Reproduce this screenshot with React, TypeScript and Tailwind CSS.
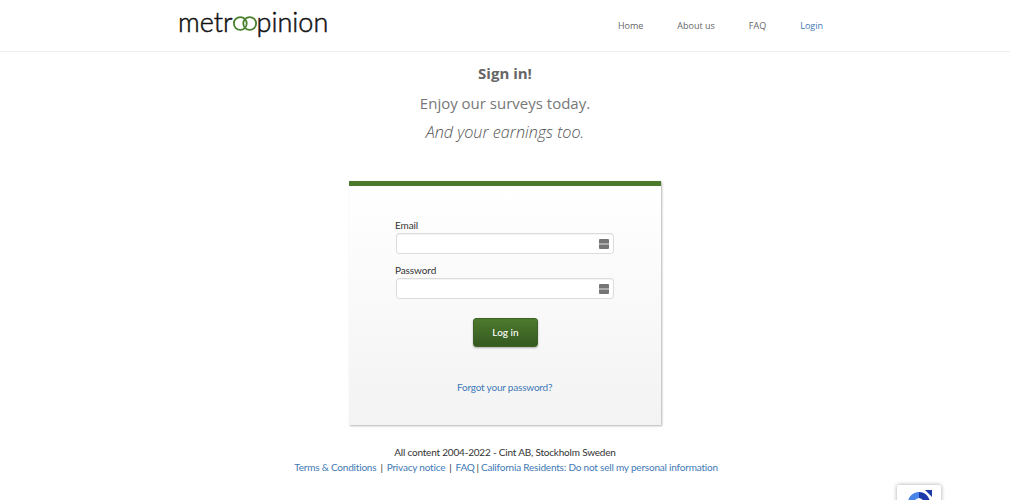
function Logo() {
  return (
    <div className="flex items-center font-['Lato',sans-serif] text-[27px] leading-none font-light text-[#111] [-webkit-text-stroke:0.5px_#111]">
      <span>metr</span>
      <svg width="26" height="15" viewBox="0 0 26 15" className="mt-[3px] mx-[-1px]" fill="none">
        <circle cx="8.3" cy="7.5" r="6.4" stroke="#4a7f2e" strokeWidth="1.8" />
        <circle cx="17.7" cy="7.5" r="6.4" stroke="#4a7f2e" strokeWidth="1.8" />
      </svg>
      <span>pinion</span>
    </div>
  );
}

function KeyIcon() {
  return (
    <svg width="10" height="10" viewBox="0 0 10 10" className="absolute right-[4px] top-1/2 -translate-y-1/2">
      <rect width="10" height="10" rx="1" fill="#757575" />
      <rect x="0" y="4.4" width="10" height="1.2" fill="#cfcfcf" />
    </svg>
  );
}

function Field({ label, top }: { label: string; top: string }) {
  return (
    <div className={top}>
      <div className="ml-[-1px] text-[10px] leading-[16px] tracking-[-0.1px] text-[#333]">{label}</div>
      <div className="relative h-[21px] w-[218px] rounded-[3px] border border-[#dcdcdc] bg-white shadow-[inset_0_1px_1px_rgba(0,0,0,0.05)]">
        <KeyIcon />
      </div>
    </div>
  );
}

export default function App() {
  return (
    <div className="relative h-[500px] w-[1024px] overflow-hidden bg-white font-['Open_Sans',sans-serif]">
      <header className="h-[52px] w-[1010px] border-b border-[#eeeeee]">
        <div className="flex h-full items-start">
          <div className="ml-[178px] mt-[8px]">
            <Logo />
          </div>
          <nav className="ml-auto mr-[187px] mt-[19px] flex gap-[34px] text-[9px] leading-[14px] font-medium text-[#666]">
            <span>Home</span>
            <span>About us</span>
            <span>FAQ</span>
            <span className="text-[#4179b5]">Login</span>
          </nav>
        </div>
      </header>

      <main className="flex w-[1010px] flex-col items-center">
        <h1 className="mt-[10px] text-[15px] leading-[22px] font-bold text-[#666]">Sign in!</h1>
        <p className="mt-[8px] text-[15px] leading-[22px] text-[#777]">Enjoy our surveys today.</p>
        <p className="mt-[7px] text-[16.2px] leading-[22px] font-light text-[#555] italic">And your earnings too.</p>

        <section className="mt-[38px] h-[244px] w-[312px] border-t-[5px] border-[#4a7a2a] bg-gradient-to-b from-white to-[#f3f3f3] pl-[47px] shadow-[1px_1px_2px_rgba(0,0,0,0.3)] font-['Lato',sans-serif]">
          <Field label="Email" top="mt-[31px]" />
          <Field label="Password" top="mt-[8px]" />
          <div className="mt-[19px] ml-[77px] flex h-[29px] w-[65px] items-center justify-center rounded-[3px] border border-[#3d6326] bg-gradient-to-b from-[#4d7a2e] to-[#35591f] text-[10px] font-medium text-white shadow-[0_1px_2px_rgba(0,0,0,0.3)]">
            Log in
          </div>
          <div className="mt-[32px] ml-[61px] text-[10px] leading-[16px] tracking-[-0.2px] text-[#4179b5]">Forgot your password?</div>
        </section>

        <footer className="mt-[20px] pl-[2px] text-center font-['Lato',sans-serif] text-[10px] leading-[15px] tracking-[-0.2px] text-[#333]">
          <div className="mr-[2px]">All content 2004-2022 - Cint AB, Stockholm Sweden</div>
          <div>
            <span className="text-[#4179b5]">Terms &amp; Conditions</span>
            <span className="mx-[4px]">|</span>
            <span className="text-[#4179b5]">Privacy notice</span>
            <span className="mx-[4px]">|</span>
            <span className="text-[#4179b5]">FAQ</span>
            <span className="mx-[2px]">|</span>
            <span className="text-[#4179b5]">California Residents: Do not sell my personal information</span>
          </div>
        </footer>
      </main>

      <div className="absolute left-[897px] top-[485px] h-[60px] w-[44px] rounded-[2px] bg-white shadow-[0_0_4px_rgba(0,0,0,0.35)]">
        <svg width="28" height="15" viewBox="0 0 28 15" className="absolute left-[8px] top-[4px]" fill="none">
          <path d="M3 15 A11 11 0 0 1 14 3 L14 9 A6 6 0 0 0 9 15 Z" fill="#4a86e8" />
          <path d="M14 3 A11 11 0 0 1 25 14 L19 15 A6 6 0 0 0 14 9 Z" fill="#1c3aa9" />
          <path d="M20 1 L27 1 L27 8 Z" fill="#1c3aa9" />
        </svg>
      </div>
    </div>
  );
}
